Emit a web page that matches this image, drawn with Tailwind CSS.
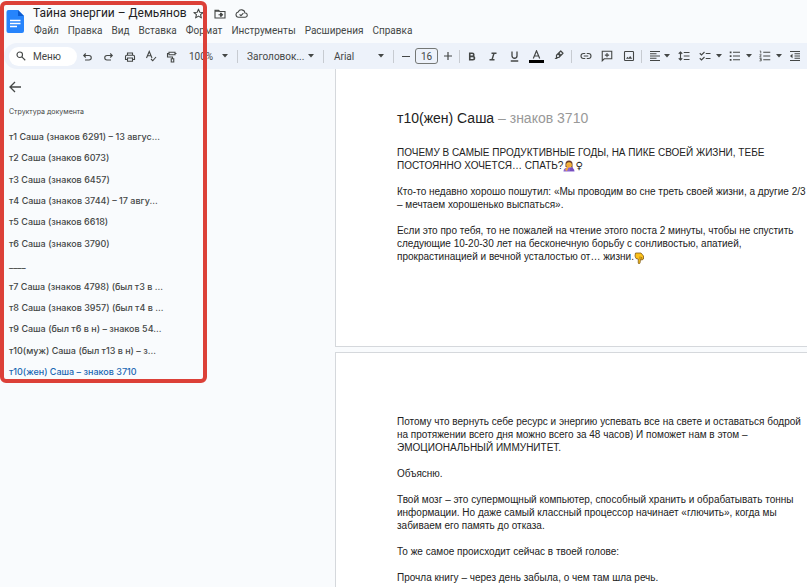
<!DOCTYPE html>
<html lang="ru">
    <head>
        <meta charset="UTF-8">
        <meta name="viewport" content="width=device-width, initial-scale=1.0">
        <title>Тайна энергии – Демьянов</title>
        <script src="https://cdn.jsdelivr.net/npm/@tailwindcss/browser@4"></script>
    </head>
    <body class="relative flex flex-col h-screen overflow-hidden bg-[#f9fbfd] text-[#444746] font-['Roboto',sans-serif]">

        <!-- icons -->
        <svg class="hidden">
            <symbol id="arrow" viewBox="0 0 6 4"><path d="M0 0h6L3 3.4z" fill="currentColor"/></symbol>
        </svg>

        <header class="flex gap-2 pl-[6px] pt-[5px] h-[43px] shrink-0">
            <a href="#" aria-label="Документы" class="pt-[5px]">
                <svg class="w-[18px] h-[23px]" viewBox="0 0 18 23">
                    <path d="M2.500 0H12l6 6v15a2 2 0 0 1-2 2H2.500a2 2 0 0 1-2-2V2a2 2 0 0 1 2-2z" fill="#2684fc"/>
                    <path d="M12 0l6 6h-6z" fill="#0b5bd0"/>
                    <path d="M4 10.500h10.500M4 13.500h10.500M4 16.500h7" stroke="#fff" stroke-width="1.300"/>
                </svg>
            </a>
            <div>
                <div class="flex items-center h-[17px] pl-[1px]">
                    <h1 class="text-[12px] leading-[17px] text-[#1f1f1f] whitespace-nowrap w-[160px]">Тайна энергии – Демьянов</h1>
                    <button aria-label="Пометить" class="w-[11px] mr-[10px]">
                        <svg class="w-[11px] h-[11px]" viewBox="0 0 24 24" fill="none" stroke="currentColor" stroke-width="2.400" stroke-linejoin="round"><path d="M12 2.500l2.800 6.700 7.200.6-5.500 4.700 1.700 7L12 17.700l-6.200 3.800 1.700-7L2 9.800l7.200-.6z"/></svg>
                    </button>
                    <button aria-label="Переместить" class="w-3 mr-[9px]">
                        <svg class="w-3 h-3" viewBox="0 0 24 24" fill="none" stroke="currentColor" stroke-width="2.200"><path d="M2 4.500h7l2.500 2.500H22v13H2z"/><path d="M2 6h8" stroke-width="3"/><path d="M9 13.500h8M13.500 10l3.500 3.500-3.500 3.500M13 9.500v8"/></svg>
                    </button>
                    <button aria-label="Сохранено" class="w-[13px]">
                        <svg class="w-[13px] h-[13px]" viewBox="0 0 24 24" fill="none" stroke="currentColor" stroke-width="2"><path d="M6.500 19a5 5 0 0 1-.6-9.900A6.500 6.500 0 0 1 18.300 11 4 4 0 0 1 19 19z"/><path d="M8.500 13.500l2.500 2.500 4.500-4.500"/></svg>
                    </button>
                </div>
                <nav class="flex gap-[9px] pl-[2px] pt-[2px] text-[10px] leading-[14px]">
                    <a href="#">Файл</a>
                    <a href="#">Правка</a>
                    <a href="#">Вид</a>
                    <a href="#">Вставка</a>
                    <a href="#">Формат</a>
                    <a href="#">Инструменты</a>
                    <a href="#">Расширения</a>
                    <a href="#">Справка</a>
                </nav>
            </div>
        </header>

        <div class="flex items-center shrink-0 h-[26px] ml-1 pl-[5px] bg-[#edf2fa] rounded-l-full text-[10px]">
            <button class="flex items-center gap-[7px] w-[68px] h-[19px] pl-[7px] bg-white rounded-full shrink-0">
                <svg class="w-[10px] h-[10px]" viewBox="0 0 20 20" fill="none" stroke="currentColor" stroke-width="2.200"><circle cx="7.500" cy="7.500" r="5.500"/><path d="M11.700 11.700L18.500 18.500"/></svg>
                Меню
            </button>
            <button aria-label="Отменить" class="grid place-items-center w-[21px] shrink-0">
                <svg class="w-[11px] h-[11px] mt-[3px]" viewBox="0 0 22 22" fill="none" stroke="currentColor" stroke-width="2.200"><path d="M7.500 3L3.500 7l4 4M3.500 7H14a4.500 4.500 0 0 1 0 9H6"/></svg>
            </button>
            <button aria-label="Повторить" class="grid place-items-center w-[21px] shrink-0">
                <svg class="w-[11px] h-[11px] mt-[3px]" viewBox="0 0 22 22" fill="none" stroke="currentColor" stroke-width="2.200"><path d="M14.500 3l4 4-4 4M18.500 7H8a4.500 4.500 0 0 0 0 9h8"/></svg>
            </button>
            <button aria-label="Печать" class="grid place-items-center w-[21px] shrink-0">
                <svg class="w-3 h-3 mt-[2px]" viewBox="0 0 24 24" fill="none" stroke="currentColor" stroke-width="2.200"><path d="M7 8V4h10v4M7 17H3v-6a2.500 2.500 0 0 1 2.500-2.500h13A2.500 2.500 0 0 1 21 11v6h-4M7 14h10v6.500H7z"/></svg>
            </button>
            <button aria-label="Правописание" class="grid place-items-center w-[21px] shrink-0">
                <svg class="w-3 h-3" viewBox="0 0 24 24" fill="none" stroke="currentColor" stroke-width="2.200"><path d="M3 16L8.500 3 14 16M5 11.500h7M12 18l3.500 3.500L22 14"/></svg>
            </button>
            <button aria-label="Копировать форматирование" class="grid place-items-center w-[21px] shrink-0">
                <svg class="w-3 h-3 mt-[2px]" viewBox="0 0 24 24" fill="none" stroke="currentColor" stroke-width="2.200"><path d="M6 2.500h12v5H6zM6 5H3v7h10v4M10.500 15.500h5v6.500h-5zM18 5h3"/></svg>
            </button>
            <button class="flex items-center justify-between w-[52px] pl-[7px] pr-[6px] shrink-0">100% <svg class="w-[6px] h-1"><use href="#arrow"/></svg></button>
            <span class="w-px h-[13px] mx-[3px] bg-[#c7cbd1] shrink-0"></span>
            <button class="flex items-center justify-between w-[79px] pl-[6px] pr-[6px] shrink-0">Заголовок... <svg class="w-[6px] h-1"><use href="#arrow"/></svg></button>
            <span class="w-px h-[13px] mx-[3px] bg-[#c7cbd1] shrink-0"></span>
            <button class="flex items-center justify-between w-[63px] pl-[7px] pr-[6px] shrink-0">Arial <svg class="w-[6px] h-1"><use href="#arrow"/></svg></button>
            <span class="w-px h-[13px] mx-[3px] bg-[#c7cbd1] shrink-0"></span>
            <button aria-label="Уменьшить" class="grid place-items-center w-[17px] shrink-0">
                <svg class="w-2 h-2" viewBox="0 0 8 8" stroke="currentColor"><path d="M0 4.500h8"/></svg>
            </button>
            <input aria-label="Размер шрифта" value="16" class="w-[23px] h-4 mx-px border border-[#747775] rounded-[3px] text-center shrink-0">
            <button aria-label="Увеличить" class="grid place-items-center w-[17px] shrink-0">
                <svg class="w-2 h-2" viewBox="0 0 8 8" stroke="currentColor" stroke-width="1.200"><path d="M0 4h8M4 0v8"/></svg>
            </button>
            <span class="w-px h-[13px] mx-[3px] bg-[#c7cbd1] shrink-0"></span>
            <button aria-label="Полужирный" class="grid place-items-center w-[21px] shrink-0 pr-[3px]">
                <svg class="w-2 h-[9px]" viewBox="0 0 16 18" fill="none" stroke="currentColor" stroke-width="3.200"><path d="M3.500 2.500H8.500a3 3 0 0 1 0 6.200H3.500zM3.500 8.700H9.500a3.300 3.300 0 0 1 0 6.800H3.500z"/></svg>
            </button>
            <button aria-label="Курсив" class="grid place-items-center w-[21px] shrink-0 pr-[3px]">
                <svg class="w-2 h-[9px]" viewBox="0 0 16 18" fill="none" stroke="currentColor" stroke-width="2.800"><path d="M5 2.500h10M1 15.500h10M10 2.500L6 15.500"/></svg>
            </button>
            <button aria-label="Подчеркнутый" class="grid place-items-center w-[21px] shrink-0 pr-[3px]">
                <svg class="w-[9px] h-[11px]" viewBox="0 0 18 22" fill="none" stroke="currentColor" stroke-width="2.600"><path d="M4 1v8.500a5 5 0 0 0 10 0V1M1.500 20h15"/></svg>
            </button>
            <button aria-label="Цвет текста" class="grid place-items-center w-[21px] shrink-0">
                <svg class="w-[15px] h-[13px]" viewBox="0 0 15 13" fill="none"><path d="M4.300 8.500L7.500 .8l3.200 7.700M5.400 6h4.200" stroke="currentColor" stroke-width="1.200"/><path d="M0 10h15v3H0z" fill="#000"/></svg>
            </button>
            <button aria-label="Выделение" class="grid place-items-center w-[21px] shrink-0 pl-[3px]">
                <svg class="w-[10px] h-[10px] mb-[3px]" viewBox="0 0 20 20" fill="none" stroke="currentColor" stroke-width="2.400" stroke-linejoin="round"><path d="M5 10.500L13.500 2l4.500 4.500L9.500 15H5zM8.500 7.500l4 4"/><path d="M5 14l-4 4h5l2-2.500z" fill="currentColor" stroke="none"/><path d="M9 7l4 4" stroke-width="4"/></svg>
            </button>
            <span class="w-px h-[13px] mx-[3px] bg-[#c7cbd1] shrink-0"></span>
            <button aria-label="Ссылка" class="grid place-items-center w-[21px] shrink-0">
                <svg class="w-3 h-3" viewBox="0 0 24 24" fill="none" stroke="currentColor" stroke-width="2.200"><path d="M10.500 7H7a5 5 0 0 0 0 10h3.500M13.500 7H17a5 5 0 0 1 0 10h-3.500M7.500 12h9"/></svg>
            </button>
            <button aria-label="Комментарий" class="grid place-items-center w-[21px] shrink-0">
                <svg class="w-3 h-3" viewBox="0 0 24 24" fill="none" stroke="currentColor" stroke-width="2.200"><path d="M2.500 2.500h19v15h-15l-4 4zM12 6v8.500M7.700 10.200h8.600"/></svg>
            </button>
            <button aria-label="Изображение" class="grid place-items-center w-[21px] shrink-0">
                <svg class="w-3 h-3 ml-[2px]" viewBox="0 0 24 24" fill="none" stroke="currentColor" stroke-width="2.200"><rect x="3" y="3" width="18" height="18" rx="1.500"/><path d="M6 17.500l3-4 2.200 2.600 3.200-4.100 4 5.500z" fill="currentColor" stroke="none"/></svg>
            </button>
            <span class="w-px h-[13px] mx-[3px] bg-[#c7cbd1] shrink-0"></span>
            <button aria-label="Выравнивание" class="flex items-center justify-between w-[28px] pl-1 pr-[3px] shrink-0">
                <svg class="w-3 h-3" viewBox="0 0 24 24" stroke="currentColor" stroke-width="2.200"><path d="M2 3h20M2 7.500h13M2 12h20M2 16.500h13M2 21h20"/></svg>
                <svg class="w-[6px] h-1"><use href="#arrow"/></svg>
            </button>
            <button aria-label="Интервал" class="grid place-items-center w-[21px] shrink-0">
                <svg class="w-3 h-3" viewBox="0 0 24 24" fill="none" stroke="currentColor" stroke-width="2.200"><path d="M11.500 5H23M11.500 12H23M11.500 19H23M5 4v16M1.500 7.500L5 4l3.500 3.500M1.500 16.500L5 20l3.500-3.500"/></svg>
            </button>
            <button aria-label="Контрольный список" class="flex items-center justify-between w-[30px] pl-[5px] pr-[2px] shrink-0">
                <svg class="w-3 h-3" viewBox="0 0 24 24" fill="none" stroke="currentColor" stroke-width="2.200"><path d="M13.500 7H23M13.500 17H23M1.500 6.500L5 10l6-6M1.500 16.500L5 20l6-6"/></svg>
                <svg class="w-[6px] h-1"><use href="#arrow"/></svg>
            </button>
            <button aria-label="Маркированный список" class="flex items-center justify-between w-[30px] pl-[5px] pr-[2px] shrink-0">
                <svg class="w-3 h-3" viewBox="0 0 24 24" stroke="currentColor" stroke-width="2.200"><path d="M8 4.500h14M8 12h14M8 19.500h14"/><path d="M1.500 4.500H5M1.500 12H5M1.500 19.500H5" stroke-width="3.500"/></svg>
                <svg class="w-[6px] h-1"><use href="#arrow"/></svg>
            </button>
            <button aria-label="Нумерованный список" class="flex items-center justify-between w-[30px] pl-[5px] pr-[2px] shrink-0">
                <svg class="w-3 h-3" viewBox="0 0 24 24" fill="none" stroke="currentColor" stroke-width="2"><path d="M8.500 4.500h14M8.500 12h14M8.500 19.500h14"/><path d="M1.500 2h2v5M1 9.500h3.500L1.500 14H5M1 16.800h3.500v5H1M2 19.300h2.500" stroke-width="1.500"/></svg>
                <svg class="w-[6px] h-1"><use href="#arrow"/></svg>
            </button>
            <button aria-label="Уменьшить отступ" class="grid place-items-center w-[21px] shrink-0">
                <svg class="w-3 h-3" viewBox="0 0 24 24" stroke="currentColor" stroke-width="2.200"><path d="M2 3h20M11 7.500h11M11 12h11M11 16.500h11M2 21h20"/><path d="M7 7.500v9L2 12z" fill="currentColor" stroke="none"/></svg>
            </button>
        </div>

        <main class="flex flex-1 min-h-0">
            <aside class="w-[335px] shrink-0 pl-[9px]">
                <button aria-label="Назад" class="block mt-3">
                    <svg class="w-3 h-3" viewBox="0 0 12 12" fill="none" stroke="currentColor" stroke-width="1.300"><path d="M12 6H1.500M6 1L1 6l5 5"/></svg>
                </button>
                <h2 class="mt-[14px] text-[7px] leading-[10px] font-['Inter',sans-serif]">Структура документа</h2>
                <ul class="flex flex-col justify-between h-[255px] mt-[10px] text-[9px] leading-[20px] font-medium font-['Inter',sans-serif] whitespace-nowrap">
                    <li><a href="#">т1 Саша (знаков 6291) – 13 авгус...</a></li>
                    <li><a href="#">т2 Саша (знаков 6073)</a></li>
                    <li><a href="#">т3 Саша (знаков 6457)</a></li>
                    <li><a href="#">т4 Саша (знаков 3744) – 17 авгу...</a></li>
                    <li><a href="#">т5 Саша (знаков 6618)</a></li>
                    <li><a href="#">т6 Саша (знаков 3790)</a></li>
                    <li><a href="#">____</a></li>
                    <li><a href="#">т7 Саша (знаков 4798) (был т3 в ...</a></li>
                    <li><a href="#">т8 Саша (знаков 3957) (был т4 в ...</a></li>
                    <li><a href="#">т9 Саша (был т6 в н) – знаков 54...</a></li>
                    <li><a href="#">т10(муж) Саша (был т13 в н) – з...</a></li>
                    <li><a href="#" class="text-[#1967b3]">т10(жен) Саша – знаков 3710</a></li>
                </ul>
            </aside>

            <div class="flex flex-col flex-1 gap-[5px] min-w-0 overflow-hidden text-[10px] leading-[13px] text-[#222] font-['Liberation_Sans',sans-serif] whitespace-nowrap">
                <section class="shrink-0 h-[278px] pl-[61px] pt-10 bg-white border-l border-b border-[#d5d8dc]">
                    <h2 class="text-[14px] leading-[18px] mb-[19px]">т10(жен) Саша <span class="text-[#999]">– знаков 3710</span></h2>
                    <p class="mb-[13px]">ПОЧЕМУ В САМЫЕ ПРОДУКТИВНЫЕ ГОДЫ, НА ПИКЕ СВОЕЙ ЖИЗНИ, ТЕБЕ<br>
                    ПОСТОЯННО ХОЧЕТСЯ… СПАТЬ?<svg class="inline-block align-middle w-3 h-3" viewBox="0 0 24 24"><path d="M5 14V8a7 7 0 0 1 14 0v7z" fill="#6b3d2c"/><circle cx="12" cy="10" r="5.500" fill="#f9c23c"/><path d="M1 23c0-6 4-8 9-8h4c5 0 9 2 9 8z" fill="#8a63d2"/><path d="M7 8l8-1 2 5-5 1-4 9-4-2 5-8z" fill="#f3a83b"/><path d="M14 16l5-2 3 8h-8z" fill="#7650bd"/></svg><span class="font-['DejaVu_Sans',sans-serif] leading-none">♀</span></p>
                    <p class="mb-[13px]">Кто-то недавно хорошо пошутил: «Мы проводим во сне треть своей жизни, а другие 2/3<br>
                    – мечтаем хорошенько выспаться».</p>
                    <p>Если это про тебя, то не пожалей на чтение этого поста 2 минуты, чтобы не спустить<br>
                    следующие 10-20-30 лет на бесконечную борьбу с сонливостью, апатией,<br>
                    прокрастинацией и вечной усталостью от… жизни.<svg class="inline-block align-middle w-[10px] h-3" viewBox="0 0 20 24"><path d="M3 2h11l5 6v6l-3 2-3-1-1 7c-.5 2-3.500 2-3.500 0v-8L4 13 2 8z" fill="#fcc21b" stroke="#7a5312" stroke-width="1.500"/><path d="M12 15V9M16 15l-1-5" stroke="#7a5312" stroke-width="1.300"/></svg></p>
                </section>
                <section class="flex-1 pl-[61px] pt-[62px] bg-white border-l border-t border-[#d5d8dc]">
                    <p class="mb-[13px]">Потому что вернуть себе ресурс и энергию успевать все на свете и оставаться бодрой<br>
                    на протяжении всего дня можно всего за 48 часов) И поможет нам в этом –<br>
                    ЭМОЦИОНАЛЬНЫЙ ИММУНИТЕТ.</p>
                    <p class="mb-[13px]">Объясню.</p>
                    <p class="mb-[13px]">Твой мозг – это супермощный компьютер, способный хранить и обрабатывать тонны<br>
                    информации. Но даже самый классный процессор начинает «глючить», когда мы<br>
                    забиваем его память до отказа.</p>
                    <p class="mb-[13px]">То же самое происходит сейчас в твоей голове:</p>
                    <p>Прочла книгу – через день забыла, о чем там шла речь.</p>
                </section>
            </div>
        </main>

        <!-- red frame over the outline -->
        <div class="absolute left-0 top-px w-[207px] h-[382px] border-4 border-[#dc4038] rounded-md pointer-events-none"></div>
    </body>
</html>
